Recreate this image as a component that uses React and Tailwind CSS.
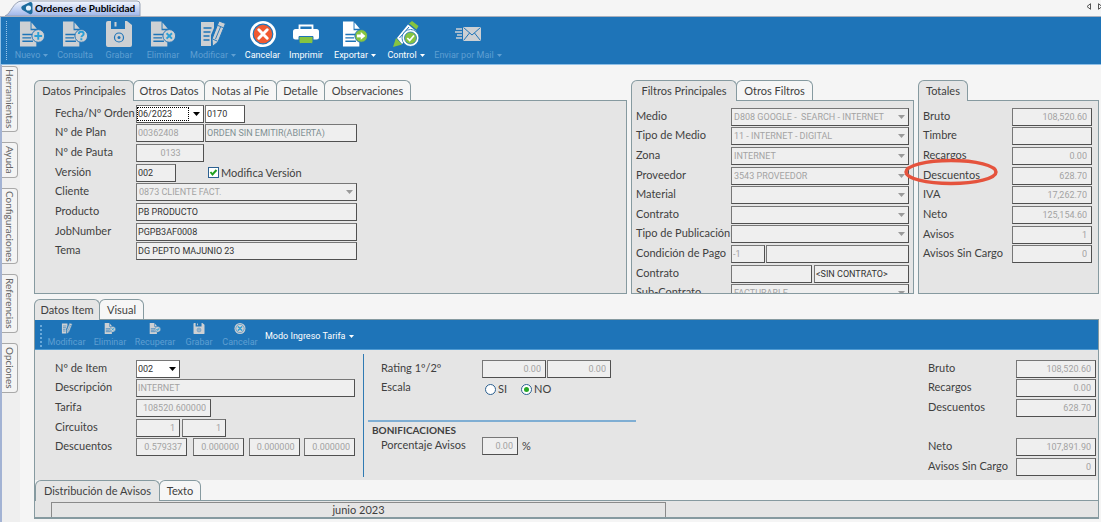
import React, { useId } from 'react';

/* ---------- icons ---------- */

function DocShape() {
  return (
    <>
      <path d="M1 0h11v9h6v17H1z" />
      <path d="M13 1l5.500 6.500H13z" />
      <g className="stroke-[#1e74b8]" strokeWidth="1.500">
        <path d="M3.500 13.500h10M3.500 17h9M3.500 20.500h11" />
      </g>
    </>
  );
}

function DocBadge({ size = 26, fill = '#cdd0d3', badge = '#cdd0d3', ink = '#2a9fd6', children }) {
  return (
    <svg width={size} height={size} viewBox="0 0 27 26" fill={fill} aria-hidden="true">
      <DocShape />
      <circle cx="20" cy="15" r="6.600" fill={badge} stroke="#1e74b8" strokeWidth="1" />
      <g stroke={ink} strokeWidth="2" fill="none">{children}</g>
    </svg>
  );
}

const NewIcon = () => <DocBadge><path d="M16 15h8M20 11v8" /></DocBadge>;
const QueryIcon = () => (
  <DocBadge>
    <path d="M17.500 13c0-3 5-3 5 0 0 1.500-2.400 1.500-2.400 3.500M20.100 17.500v2" />
  </DocBadge>
);
const DeleteIcon = ({ size }) => <DocBadge size={size}><path d="M17.200 12.200l5.600 5.600M22.800 12.200l-5.600 5.600" /></DocBadge>;
const RecoverIcon = ({ size }) => (
  <DocBadge size={size}><path d="M22.500 12v4h-5M19.500 13.500l-2.300 2.500 2.300 2.500" /></DocBadge>
);

function SaveIcon({ size = 26 }) {
  return (
    <svg width={size} height={size} viewBox="0 0 26 26" aria-hidden="true">
      <path d="M2 0h3v8h14V0h2l5 4v20a2 2 0 0 1-2 2H2a2 2 0 0 1-2-2V2a2 2 0 0 1 2-2z" fill="#cdd0d3" />
      <path d="M8.500 1h2v4.500h-2z" fill="#cdd0d3" />
      <circle cx="13" cy="16.500" r="4.500" fill="none" stroke="#1e74b8" strokeWidth="1.200" />
      <circle cx="13" cy="16.500" r="1.500" fill="#1e74b8" />
    </svg>
  );
}

function EditIcon({ size = 26 }) {
  return (
    <svg width={size} height={size} viewBox="0 0 26 26" fill="#cdd0d3" aria-hidden="true">
      <path d="M1 1h13v6l-3 7v11H1z" />
      <path d="M3.500 7h8M3.500 11h7M3.500 15h6M3.500 19h6" stroke="#1e74b8" strokeWidth="1.300" />
      <path d="M19 0l6.500 2.500L18 21l-5.500 4.500L12 18z" stroke="#1e74b8" strokeWidth="1" />
      <path d="M18 4.500l5.500 2.300M12.500 18l5 2.200M20.500 6l-5 12" stroke="#1e74b8" strokeWidth=".9" fill="none" />
    </svg>
  );
}

function CancelIcon({ size = 26, active }) {
  return (
    <svg width={size} height={size} viewBox="0 0 26 26" aria-hidden="true">
      <circle cx="13" cy="13" r="13" fill={active ? '#ffffff' : '#cdd0d3'} />
      <circle cx="13" cy="13" r="9.800" fill={active ? '#f15a31' : '#cdd0d3'} stroke="#1e74b8" strokeWidth="1.200" />
      <path d="M8.800 8.800l8.400 8.400M17.200 8.800l-8.400 8.400" stroke={active ? '#ffffff' : '#2a9fd6'} strokeWidth="3" strokeLinecap="round" />
    </svg>
  );
}

function PrintIcon() {
  return (
    <svg width="26" height="26" viewBox="0 0 26 26" aria-hidden="true">
      <path d="M6.500 8V4.500h13V8" fill="none" stroke="#fff" strokeWidth="1.800" />
      <rect y="8" width="26" height="10.500" rx="2.500" fill="#fff" />
      <path d="M6 15.500h14V21a1.500 1.500 0 0 1-1.500 1.500h-11A1.500 1.500 0 0 1 6 21z" fill="#86c440" stroke="#1e74b8" />
    </svg>
  );
}

const ExportIcon = () => (
  <DocBadge fill="#ffffff" badge="#86c440" ink="#ffffff">
    <path d="M15.500 15H20" strokeWidth="3" />
    <path d="M19.500 11l4.800 4-4.800 4z" fill="#fff" strokeWidth="0" />
  </DocBadge>
);

function ControlIcon() {
  return (
    <svg width="26" height="26" viewBox="0 0 26 26" aria-hidden="true">
      <path d="M16 2.500L19 0l6.500 5L23.500 8.500z" fill="#86c440" />
      <path d="M15 3.500l8 6.500L9 23l-5-6z" fill="#fff" />
      <path d="M16 6L6.500 17M19 8L9 19" stroke="#1e74b8" strokeWidth="1" />
      <path d="M3 17l6 6.500L0 26z" fill="#86c440" />
      <circle cx="17.500" cy="17" r="8.500" fill="#fff" stroke="#1e74b8" strokeWidth=".8" />
      <circle cx="17.500" cy="17" r="6" fill="#86c440" stroke="#1e74b8" strokeWidth=".8" />
      <path d="M14.300 17l2.400 2.500 4.300-5" fill="none" stroke="#fff" strokeWidth="1.800" />
    </svg>
  );
}

function MailIcon() {
  return (
    <svg width="26" height="26" viewBox="0 0 26 26" aria-hidden="true">
      <rect x="8" y="6" width="18" height="14" fill="#cdd0d3" />
      <path d="M8.500 6.500l8.500 7.500 8.500-7.500M8.500 19.500l6-7.500M25.500 19.500l-6-7.500" fill="none" stroke="#1e74b8" strokeWidth="1" />
      <path d="M1 8h6M0 11h7M2 14h5M1 17h6" stroke="#cdd0d3" strokeWidth="1.400" />
    </svg>
  );
}

function Caret({ className = '' }) {
  return (
    <svg width="5" height="3" viewBox="0 0 5 3" className={className} fill="currentColor" aria-hidden="true">
      <path d="M0 0h5L2.500 3z" />
    </svg>
  );
}

/* ---------- toolbar ---------- */

function ToolButton({ icon, label, caret, active, className }) {
  return (
    <button
      type="button"
      disabled={!active}
      className={`flex shrink-0 flex-col items-center gap-px pt-1 text-[9px] leading-[14px] whitespace-nowrap ${active ? 'text-white' : 'text-[#5f9fd2]'} ${className}`}
    >
      {icon}
      <span className="flex items-center gap-[3px]">
        {label}
        {caret && <Caret />}
      </span>
    </button>
  );
}

function SmallTool({ icon, label, className }) {
  return (
    <button type="button" disabled className={`flex shrink-0 flex-col items-center gap-px text-[9px] leading-[14px] text-[#5f9fd2] ${className}`}>
      {icon}
      <span>{label}</span>
    </button>
  );
}

/* ---------- form parts ---------- */

const BOX = 'h-[18px] min-w-0 rounded-none border border-[#777] border-r-[#505050] border-b-[#505050] font-[Roboto,sans-serif] text-[9px] leading-4';

function Text({ value = '', className = 'w-full', tone = 'text-[#a3a3a3]', bg = 'bg-[#efefef]', right, label, id, disabled = true }) {
  return (
    <input
      id={id}
      aria-label={label}
      type="text"
      defaultValue={value}
      readOnly={disabled}
      className={`${BOX} ${bg} ${tone} ${right ? 'pr-1 text-right' : 'pl-px'} ${className}`}
    />
  );
}

function Select({ value = '', className = 'w-full', active, focused, id }) {
  return (
    <span className={`relative flex min-w-0 ${className}`}>
      <select
        id={id}
        disabled={!active}
        className={`${BOX} w-full appearance-none opacity-100 ${active ? 'bg-white pl-px text-[#333]' : 'bg-[#efefef] pl-0.5 text-[#a3a3a3]'}`}
      >
        <option>{value}</option>
      </select>
      {focused && <span className="pointer-events-none absolute inset-y-0.5 left-px w-[52px] border border-dotted border-black" />}
      <svg width="7" height="4" viewBox="0 0 7 4" className={`pointer-events-none absolute top-[7px] right-1 ${active ? 'fill-black' : 'fill-[#9a9a9a]'}`} aria-hidden="true">
        <path d="M0 0h7L3.500 4z" />
      </svg>
    </span>
  );
}

function Row({ label, labelClass, htmlFor, children }) {
  return (
    <div className="relative flex min-w-0 items-center">
      <label htmlFor={htmlFor} className={`shrink-0 pb-0.5 whitespace-nowrap ${labelClass}`}>{label}</label>
      {children}
    </div>
  );
}

function SelectRow({ label, labelClass, value, className = 'flex-1' }) {
  const id = useId();
  return <Row label={label} labelClass={labelClass} htmlFor={id}><Select id={id} value={value} className={className} /></Row>;
}

function TextRow({ label, labelClass, children, className = 'w-0 flex-1', ...rest }) {
  const id = useId();
  return (
    <Row label={label} labelClass={labelClass} htmlFor={id}>
      <Text id={id} className={className} {...rest} />
      {children}
    </Row>
  );
}

function Tabs({ items }) {
  return (
    <div role="tablist" className="flex h-5 shrink-0">
      {items.map(([label, width], i) => (
        <button
          key={label}
          type="button"
          role="tab"
          aria-selected={i === 0}
          className={`shrink-0 rounded-t-md border border-b-0 border-[#869aa0] whitespace-nowrap ${i === 0 ? 'relative z-10 -mb-px h-[21px] bg-[#e5e5e5]' : '-ml-px h-full bg-[#f6f6f6]'} ${width}`}
        >
          {label}
        </button>
      ))}
    </div>
  );
}

const PANEL = 'min-h-0 flex-1 border border-[#869aa0] bg-[#e5e5e5]';
const ROWS = 'grid auto-rows-fr grid-cols-1';

/* ---------- panels ---------- */

function MainData() {
  const lc = 'w-[81px]';
  const dark = 'text-[#333]';
  return (
    <section className="flex min-w-0 flex-1 flex-col">
      <Tabs items={[['Datos Principales', 'w-[100px]'], ['Otros Datos', 'w-[72px]'], ['Notas al Pie', 'w-[73px]'], ['Detalle', 'w-[49px]'], ['Observaciones', 'w-[87px]']]} />
      <div className={`${PANEL} pt-[3px] pl-5`}>
        <div className={`${ROWS} h-[157px] w-[302px]`}>
          <Row label="Fecha/Nº Orden" labelClass={lc} htmlFor="fecha">
            <Select id="fecha" value="06/2023" active focused className="w-[68px]" />
            <Text label="Nº Orden" value="0170" disabled={false} tone={dark} bg="bg-white" className="ml-px w-10" />
          </Row>
          <TextRow label="Nº de Plan" labelClass={lc} value="00362408" className="w-[68px]">
            <Text label="Estado" value="ORDEN SIN EMITIR(ABIERTA)" tone="text-[#7f8f93]" className="ml-px flex-1" />
          </TextRow>
          <TextRow label="Nº de Pauta" labelClass={lc} value="0133" className="w-[68px] text-center" />
          <TextRow label="Versión" labelClass={lc} value="002" tone={dark} className="w-10">
            <label className="ml-8 flex items-center gap-0.5 whitespace-nowrap">
              <span className="relative flex">
                <input type="checkbox" defaultChecked className="peer size-[11px] appearance-none border border-[#2c6191] bg-white" />
                <svg viewBox="0 0 11 11" className="pointer-events-none absolute inset-0 hidden size-[11px] peer-checked:block" aria-hidden="true">
                  <path d="M2.500 5l2 2.500 4-4.500" fill="none" stroke="#21a121" strokeWidth="2" />
                </svg>
              </span>
              Modifica Versión
            </label>
          </TextRow>
          <SelectRow label="Cliente" labelClass={lc} value="0873 CLIENTE FACT." />
          <TextRow label="Producto" labelClass={lc} value="PB PRODUCTO" tone={dark} />
          <TextRow label="JobNumber" labelClass={lc} value="PGPB3AF0008" tone={dark} />
          <TextRow label="Tema" labelClass={lc} value="DG PEPTO MAJUNIO 23" tone={dark} />
        </div>
      </div>
    </section>
  );
}

function Filters() {
  const lc = 'w-[95px]';
  return (
    <section className="flex w-[283px] shrink-0 flex-col">
      <Tabs items={[['Filtros Principales', 'w-[106px]'], ['Otros Filtros', 'w-[77px]']]} />
      <div className={`${PANEL} overflow-hidden px-1 pt-1.5`}>
        <div className={`${ROWS} h-[196px]`}>
          <SelectRow label="Medio" labelClass={lc} value={'D808 GOOGLE - \u00a0SEARCH - INTERNET'} />
          <SelectRow label="Tipo de Medio" labelClass={lc} value="11 - INTERNET - DIGITAL" />
          <SelectRow label="Zona" labelClass={lc} value="INTERNET" />
          <SelectRow label="Proveedor" labelClass={lc} value="3543 PROVEEDOR" />
          <SelectRow label="Material" labelClass={lc} />
          <SelectRow label="Contrato" labelClass={lc} />
          <SelectRow label="Tipo de Publicación" labelClass={lc} />
          <TextRow label="Condición de Pago" labelClass={lc} value="-1" className="w-[34px]">
            <Text label="Descripción de condición" className="ml-px w-0 flex-1" />
          </TextRow>
          <TextRow label="Contrato" labelClass={lc} className="w-[81px]">
            <Text label="Descripción de contrato" value="<SIN CONTRATO>" tone="text-[#333]" className="ml-0.5 w-0 flex-1" />
          </TextRow>
          <SelectRow label="Sub-Contrato" labelClass={lc} value="FACTURABLE" />
        </div>
      </div>
    </section>
  );
}

function Totals() {
  const lc = 'w-[89px]';
  return (
    <section className="flex w-[181px] shrink-0 flex-col">
      <Tabs items={[['Totales', 'w-[50px]']]} />
      <div className={`${PANEL} pt-1.5 pr-1.5 pl-1`}>
        <div className={`${ROWS} h-[157px]`}>
          <TextRow label="Bruto" labelClass={lc} value="108,520.60" right />
          <TextRow label="Timbre" labelClass={lc} right />
          <TextRow label="Recargos" labelClass={lc} value="0.00" right />
          <TextRow label="Descuentos" labelClass={lc} value="628.70" right>
            <svg width="96" height="28" viewBox="0 0 96 28" className="pointer-events-none absolute -top-2 -left-5" aria-hidden="true">
              <ellipse cx="48" cy="14" rx="45" ry="11.500" fill="none" stroke="#e5533d" strokeWidth="3.500" />
            </svg>
          </TextRow>
          <TextRow label="IVA" labelClass={lc} value="17,262.70" right />
          <TextRow label="Neto" labelClass={lc} value="125,154.60" right />
          <TextRow label="Avisos" labelClass={lc} value="1" right />
          <TextRow label="Avisos Sin Cargo" labelClass={lc} value="0" right />
        </div>
      </div>
    </section>
  );
}

function Radio({ label, checked }) {
  return (
    <label className="flex items-center gap-0.5">
      <span className="relative flex">
        <input type="radio" name="escala" defaultChecked={checked} className="peer size-[11px] appearance-none rounded-full border border-[#2c6191] bg-white" />
        <span className="pointer-events-none absolute top-[3px] left-[3px] hidden size-[5px] rounded-full bg-[#27a827] peer-checked:block" />
      </span>
      {label}
    </label>
  );
}

function ItemData() {
  const lc = 'w-[81px]';
  const mc = 'w-[101px]';
  const rc = 'w-[88px]';
  return (
    <div className="flex h-[130px] shrink-0 bg-[#e5e5e5] pt-1 pb-[3px]">
      <div className="w-[329px] shrink-0 border-r border-[#2f7ab3] pt-[5px] pl-5">
        <div className={`${ROWS} h-[98px] w-[300px]`}>
          <Row label="Nº de Item" labelClass={lc} htmlFor="item">
            <Select id="item" value="002" active className="w-11" />
          </Row>
          <TextRow label="Descripción" labelClass={lc} value="INTERNET" />
          <TextRow label="Tarifa" labelClass={lc} value="108520.600000" right className="w-[75px]" />
          <TextRow label="Circuitos" labelClass={lc} value="1" right className="w-11">
            <Text label="Circuitos 2" value="1" right className="ml-0.5 w-11" />
          </TextRow>
          <TextRow label="Descuentos" labelClass={lc} value="0.579337" right className="w-[51px]">
            <div className="ml-1.5 flex flex-1 justify-between">
              <Text label="Descuento 2" value="0.000000" right className="w-[51px]" />
              <Text label="Descuento 3" value="0.000000" right className="w-[51px]" />
              <Text label="Descuento 4" value="0.000000" right className="w-[51px]" />
            </div>
          </TextRow>
        </div>
      </div>
      <div className="w-[272px] shrink-0 pt-[5px] pl-1">
        <div className={`${ROWS} h-10 pl-[13px]`}>
          <TextRow label="Rating 1º/2º" labelClass={mc} value="0.00" right className="w-16">
            <Text label="Rating 2" value="0.00" right className="ml-px w-16" />
          </TextRow>
          <div className="flex items-center" role="radiogroup" aria-label="Escala">
            <span className={`pb-1 ${mc}`}>Escala</span>
            <span className="flex gap-3.5 pl-[3px]">
              <Radio label="SI" />
              <Radio label="NO" checked />
            </span>
          </div>
        </div>
        <h2 className="mt-[21px] border-t-2 border-[#7faed3] pt-px pl-1 text-[10px] font-bold">BONIFICACIONES</h2>
        <div className="pl-[13px]">
          <TextRow label="Porcentaje Avisos" labelClass={mc} value="0.00" right className="w-9">
            <span className="ml-1">%</span>
          </TextRow>
        </div>
      </div>
      <div className="flex flex-1 justify-end pt-[5px] pr-0.5">
        <div className={`${ROWS} h-[118px] w-[168px]`}>
          <TextRow label="Bruto" labelClass={rc} value="108,520.60" right />
          <TextRow label="Recargos" labelClass={rc} value="0.00" right />
          <TextRow label="Descuentos" labelClass={rc} value="628.70" right />
          <span />
          <TextRow label="Neto" labelClass={rc} value="107,891.90" right />
          <TextRow label="Avisos Sin Cargo" labelClass={rc} value="0" right />
        </div>
      </div>
    </div>
  );
}

function Items() {
  return (
    <section className="flex flex-col">
      <Tabs items={[['Datos Item', 'w-[66px]'], ['Visual', 'w-[45px]']]} />
      <div className="border border-b-2 border-[#869aa0] bg-[#f5f5f5]">
        <div className="flex h-[30px] border-b border-[#4f9bd3] bg-[#1e74b8] pt-[3px] font-[Roboto,sans-serif]">
          <span className="my-0.5 mr-1.5 ml-[5px] border-l-2 border-dotted border-[#6aa9da]" />
          <SmallTool icon={<EditIcon size={14} />} label="Modificar" className="w-[37px]" />
          <SmallTool icon={<DeleteIcon size={14} />} label="Eliminar" className="ml-1.5 w-[38px]" />
          <SmallTool icon={<RecoverIcon size={14} />} label="Recuperar" className="ml-1 w-[44px]" />
          <SmallTool icon={<SaveIcon size={14} />} label="Grabar" className="ml-1.5 w-8" />
          <SmallTool icon={<CancelIcon size={14} />} label="Cancelar" className="ml-1.5 w-[38px]" />
          <button type="button" className="ml-1.5 flex items-center gap-[3px] text-[9px] whitespace-nowrap text-white">
            Modo Ingreso Tarifa <Caret />
          </button>
        </div>
        <ItemData />
        <Tabs items={[['Distribución de Avisos', 'w-[125px]'], ['Texto', 'w-[42px]']]} />
        <div className="border-t border-[#869aa0] bg-[#e5e5e5] px-4 pt-px">
          <div className="w-[615px] border border-b-0 border-[#8a8a8a] text-center leading-[14px]">junio 2023</div>
        </div>
      </div>
    </section>
  );
}

function SideTabs() {
  const items = [
    ['Herramientas', 'h-[66px]'],
    ['Ayuda', 'mt-2.5 h-9'],
    ['Configuraciones', 'mt-2.5 h-[76px]'],
    ['Referencias', 'mt-2.5 h-[59px]'],
    ['Opciones', 'mt-2.5 h-[50px]'],
  ];
  return (
    <nav className="w-5 shrink-0 border-l-2 border-[#a3b3d4] bg-[#efefef] pt-px pr-0.5">
      {items.map(([label, cls]) => (
        <button key={label} type="button" className={`flex w-full items-center justify-center rounded-r border border-l-0 border-[#a9a9a9] bg-[#f4f4f4] text-[10px] text-[#666] [writing-mode:vertical-rl] ${cls}`}>
          {label}
        </button>
      ))}
    </nav>
  );
}

export default function App() {
  return (
    <div className="flex min-h-screen flex-col bg-[#f5f5f5] font-[Lato,sans-serif] text-[11px] leading-[14px] text-[#3f3f3f]">
      <header>
        <div className="flex h-[17px] items-end justify-between border-b border-[#a9b0bd]">
          <div className="relative flex h-4 w-[141px] items-center">
            <svg viewBox="0 0 141 16" className="absolute inset-0 h-4 w-[141px]" aria-hidden="true">
              <defs>
                <linearGradient id="tab" x1="0" y1="0" x2="0" y2="1">
                  <stop offset="0" stopColor="#f4f7fe" />
                  <stop offset="1" stopColor="#9db5ea" />
                </linearGradient>
              </defs>
              <path d="M5 16C11 14 13 1 22 1h115q3 0 3 3v12z" fill="url(#tab)" stroke="#9aa3b5" />
              <path d="M21.500 8.500Q20.500 7 22.500 5.700L29.500 2.200Q32.300 1.500 32.500 4v8.500Q32 15 29.500 14L23 10.300Q21.800 9.500 21.500 8.500z" fill="#1d6c9e" />
              <circle cx="28.500" cy="8" r="2.600" fill="#e6f2fb" />
            </svg>
            <h1 className="relative pl-[35px] text-[10px] font-bold whitespace-nowrap text-black">Ordenes de Publicidad</h1>
          </div>
          <div className="flex self-start pt-[3px]">
            <button type="button" aria-label="Anterior" className="w-3">
              <svg width="5" height="7" viewBox="0 0 5 7" aria-hidden="true"><path d="M4.500.7v5.600L1 3.500z" fill="none" stroke="#555" /></svg>
            </button>
            <button type="button" aria-label="Siguiente" className="w-[3px] overflow-hidden">
              <svg width="5" height="7" viewBox="0 0 5 7" aria-hidden="true"><path d="M.5.7v5.600L4 3.500z" fill="none" stroke="#555" /></svg>
            </button>
          </div>
        </div>
        <div className="flex h-12 border-b border-l border-[#8fbfe6] bg-[#1e74b8] font-[Roboto,sans-serif]">
          <span className="my-1 mr-[3px] ml-[5px] border-l border-dotted border-[#9cc6e8]" />
          <ToolButton icon={<NewIcon />} label="Nuevo" caret className="w-[43px]" />
          <ToolButton icon={<QueryIcon />} label="Consulta" className="w-11" />
          <ToolButton icon={<SaveIcon />} label="Grabar" className="w-11" />
          <ToolButton icon={<DeleteIcon />} label="Eliminar" className="w-11" />
          <ToolButton icon={<EditIcon />} label="Modificar" caret className="w-14" />
          <ToolButton active icon={<CancelIcon active />} label="Cancelar" className="w-[43px]" />
          <ToolButton active icon={<PrintIcon />} label="Imprimir" className="w-11" />
          <ToolButton active icon={<ExportIcon />} label="Exportar" caret className="w-[54px]" />
          <ToolButton active icon={<ControlIcon />} label="Control" caret className="w-12" />
          <ToolButton icon={<MailIcon />} label="Enviar por Mail" caret className="w-[76px]" />
        </div>
      </header>
      <div className="flex flex-1">
        <SideTabs />
        <main className="flex min-w-0 flex-1 flex-col gap-[5px] pt-[15px] pr-0.5 pl-3.5">
          <div className="flex h-[214px] gap-1">
            <MainData />
            <Filters />
            <Totals />
          </div>
          <Items />
        </main>
      </div>
    </div>
  );
}
